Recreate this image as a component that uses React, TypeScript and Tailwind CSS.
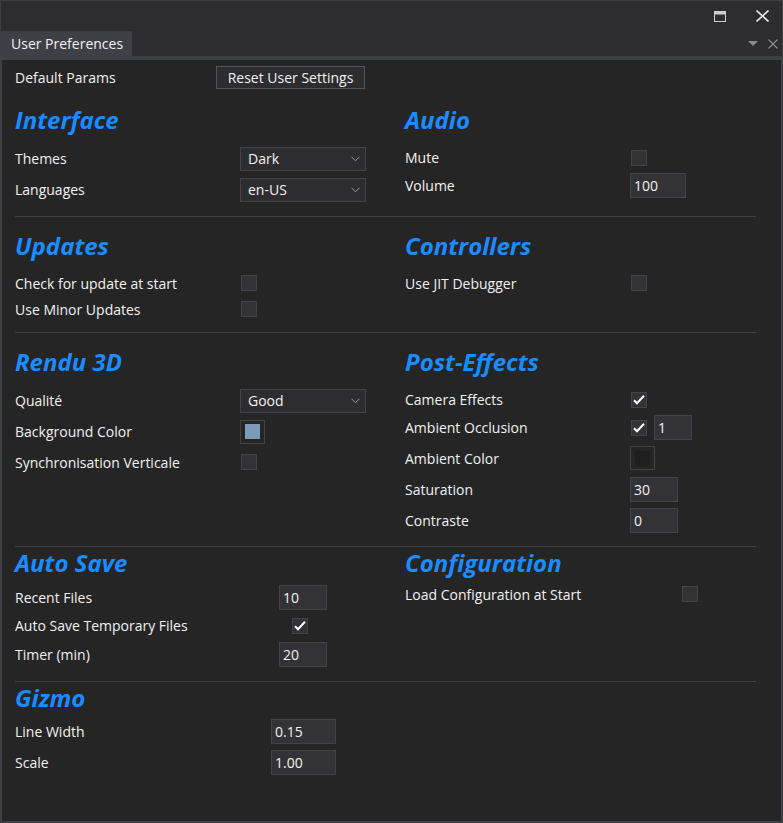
import React from 'react';

const FONT = "font-['Open_Sans','Noto_Sans',sans-serif]";

function Checkbox({ checked }: { checked?: boolean }) {
  return (
    <div className="w-4 h-4 shrink-0 bg-[#333337] border border-[#434346] flex items-center justify-center">
      {checked && (
        <svg width="14" height="14" viewBox="0 0 14 14" fill="none">
          <path d="M2 7.2 L5 10.2 L12 2.8" stroke="#ffffff" strokeWidth="2" />
        </svg>
      )}
    </div>
  );
}

function Dropdown({ value }: { value: string }) {
  return (
    <div className="w-[126px] h-[24px] shrink-0 bg-[#2d2d30] border border-[#434346] flex items-center justify-between pl-[7px] pr-[5px]">
      <span>{value}</span>
      <svg width="9" height="6" viewBox="0 0 9 6" fill="none">
        <path d="M0.5 0.8 L4.5 4.8 L8.5 0.8" stroke="#9a9a9a" strokeWidth="1" />
      </svg>
    </div>
  );
}

function TextBox({ value, w }: { value: string; w: string }) {
  return (
    <div className={`${w} h-[25px] shrink-0 bg-[#333337] border border-[#434346] flex items-center pl-[3px]`}>
      {value}
    </div>
  );
}

function Swatch({ color }: { color: string }) {
  return (
    <div className="w-[25px] h-[24px] shrink-0 border border-[#434346] flex items-center justify-center">
      <div className={`w-[15px] h-[15px] ${color}`} />
    </div>
  );
}

function Row({
  label,
  lw,
  h,
  children,
}: {
  label: string;
  lw: string;
  h: string;
  children: React.ReactNode;
}) {
  return (
    <div className={`flex items-center ${h}`}>
      <div className={`${lw} shrink-0 whitespace-nowrap`}>{label}</div>
      {children}
    </div>
  );
}

function Heading({ children, lh = 'leading-[32px]' }: { children: React.ReactNode; lh?: string }) {
  return (
    <div className={`h-[34px] ${lh} text-[24px] font-bold italic text-[#1a8cff] whitespace-nowrap`}>
      {children}
    </div>
  );
}

function Separator({ mt }: { mt: string }) {
  return <div className={`${mt} h-px w-[741px] bg-[#3f3f46]`} />;
}

export default function App() {
  return (
    <div
      className={`w-[783px] h-[823px] bg-[#2d2d30] border border-[#3f3f46] flex flex-col text-[14px] text-[#f1f1f1] ${FONT}`}
    >
      {/* window title bar */}
      <div className="h-[30px] shrink-0 flex items-center justify-end pr-[13px] gap-[30px]">
        <svg width="12" height="11" viewBox="0 0 12 11" fill="none">
          <rect x="0.5" y="0.5" width="11" height="10" stroke="#d0d0d0" strokeWidth="1" />
          <rect x="0.5" y="0.5" width="11" height="3" fill="#d0d0d0" />
        </svg>
        <svg width="13" height="12" viewBox="0 0 13 12" fill="none">
          <path d="M0.5 0.5 L12.5 11.5 M12.5 0.5 L0.5 11.5" stroke="#e4e4e4" strokeWidth="1.6" />
        </svg>
      </div>

      {/* tab row */}
      <div className="h-[25px] shrink-0 flex items-center">
        <div className="w-[131px] h-full bg-[#3f3f46] flex items-center pl-[10px] text-[#f1f1f1]">
          User Preferences
        </div>
        <div className="flex-1" />
        <div className="flex items-center gap-[10px] pr-[4px]">
          <svg width="10" height="5" viewBox="0 0 10 5">
            <path d="M0 0 L10 0 L5 5 Z" fill="#8a8a8a" />
          </svg>
          <svg width="10" height="10" viewBox="0 0 10 10" fill="none">
            <path d="M0.5 0.5 L9.5 9.5 M9.5 0.5 L0.5 9.5" stroke="#8a8a8a" strokeWidth="1.2" />
          </svg>
        </div>
      </div>
      <div className="h-[4px] shrink-0 bg-[#3f3f46]" />

      {/* content */}
      <div className="flex-1 bg-[#252526] border-x border-b border-[#3f3f46] pl-[13px]">
        <div className="mt-[6px] h-[23px] flex items-center">
          <div className="w-[201px] shrink-0">Default Params</div>
          <div className="w-[149px] h-[23px] bg-[#2d2d30] border border-[#555558] flex items-center justify-center">
            Reset User Settings
          </div>
        </div>

        {/* Interface / Audio */}
        <div className="mt-[17px] grid grid-cols-[390px_351px]">
          <div>
            <Heading lh="leading-[28px]">Interface</Heading>
            <div className="pt-[3px]">
              <Row label="Themes" lw="w-[225px]" h="h-[31px]">
                <Dropdown value="Dark" />
              </Row>
              <Row label="Languages" lw="w-[225px]" h="h-[31px]">
                <Dropdown value="en-US" />
              </Row>
            </div>
          </div>
          <div>
            <Heading lh="leading-[28px]">Audio</Heading>
            <div className="pt-[3px]">
              <Row label="Mute" lw="w-[226px]" h="h-[29px]">
                <Checkbox />
              </Row>
              <Row label="Volume" lw="w-[225px]" h="h-[27px]">
                <TextBox value="100" w="w-[56px]" />
              </Row>
            </div>
          </div>
        </div>
        <Separator mt="mt-[11px]" />

        {/* Updates / Controllers */}
        <div className="mt-[13px] grid grid-cols-[390px_351px]">
          <div>
            <Heading>Updates</Heading>
            <div className="pt-[6px]">
              <Row label="Check for update at start" lw="w-[226px]" h="h-[26px]">
                <Checkbox />
              </Row>
              <Row label="Use Minor Updates" lw="w-[226px]" h="h-[26px]">
                <Checkbox />
              </Row>
            </div>
          </div>
          <div>
            <Heading>Controllers</Heading>
            <div className="pt-[6px]">
              <Row label="Use JIT Debugger" lw="w-[226px]" h="h-[26px]">
                <Checkbox />
              </Row>
            </div>
          </div>
        </div>
        <Separator mt="mt-[10px]" />

        {/* Rendu 3D / Post-Effects */}
        <div className="mt-[13px] grid grid-cols-[390px_351px]">
          <div>
            <Heading>Rendu 3D</Heading>
            <div className="pt-[5px]">
              <Row label="Qualité" lw="w-[225px]" h="h-[31px]">
                <Dropdown value="Good" />
              </Row>
              <Row label="Background Color" lw="w-[225px]" h="h-[31px]">
                <Swatch color="bg-[#7b9bb6]" />
              </Row>
              <Row label="Synchronisation Verticale" lw="w-[226px]" h="h-[30px]">
                <Checkbox />
              </Row>
            </div>
          </div>
          <div>
            <Heading>Post-Effects</Heading>
            <div className="pt-[5px]">
              <Row label="Camera Effects" lw="w-[226px]" h="h-[29px]">
                <Checkbox checked />
              </Row>
              <Row label="Ambient Occlusion" lw="w-[226px]" h="h-[27px]">
                <Checkbox checked />
                <div className="ml-[7px]">
                  <TextBox value="1" w="w-[38px]" />
                </div>
              </Row>
              <Row label="Ambient Color" lw="w-[225px]" h="h-[34px]">
                <Swatch color="bg-[#1e1e1e]" />
              </Row>
              <Row label="Saturation" lw="w-[225px]" h="h-[28px]">
                <TextBox value="30" w="w-[48px]" />
              </Row>
              <Row label="Contraste" lw="w-[225px]" h="h-[34px]">
                <TextBox value="0" w="w-[48px]" />
              </Row>
            </div>
          </div>
        </div>
        <Separator mt="mt-[9px]" />

        {/* Auto Save / Configuration */}
        <div className="grid grid-cols-[390px_351px]">
          <div>
            <Heading>Auto Save</Heading>
            <div className="pt-[2px]">
              <Row label="Recent Files" lw="w-[264px]" h="h-[29px]">
                <TextBox value="10" w="w-[48px]" />
              </Row>
              <Row label="Auto Save Temporary Files" lw="w-[277px]" h="h-[27px]">
                <Checkbox checked />
              </Row>
              <Row label="Timer (min)" lw="w-[264px]" h="h-[31px]">
                <TextBox value="20" w="w-[48px]" />
              </Row>
            </div>
          </div>
          <div>
            <Heading>Configuration</Heading>
            <Row label="Load Configuration at Start" lw="w-[277px]" h="h-[26px]">
              <Checkbox />
            </Row>
          </div>
        </div>
        <Separator mt="mt-[11px]" />

        {/* Gizmo */}
        <div>
          <Heading>Gizmo</Heading>
          <Row label="Line Width" lw="w-[256px]" h="h-[30px]">
            <TextBox value="0.15" w="w-[65px]" />
          </Row>
          <Row label="Scale" lw="w-[256px]" h="h-[33px]">
            <TextBox value="1.00" w="w-[65px]" />
          </Row>
        </div>
      </div>
    </div>
  );
}
